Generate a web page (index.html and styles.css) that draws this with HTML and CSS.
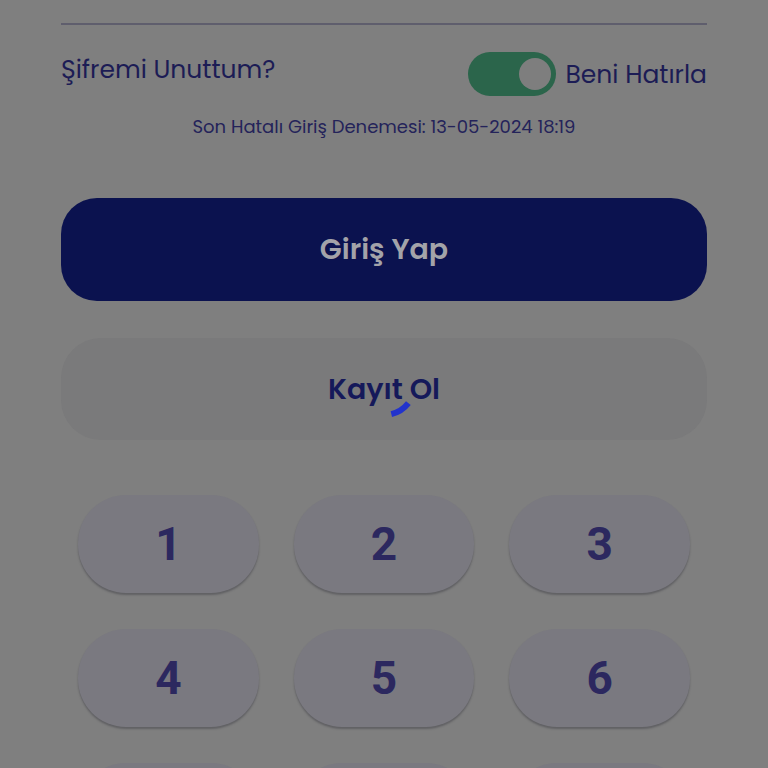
FILE: index.html
```html
<!DOCTYPE html>
<html lang="tr">
<head>
<meta charset="utf-8">
<title>Giriş</title>
<link rel="stylesheet" href="styles.css">
</head>
<body>
<main class="screen">
  <div class="divider"></div>
  <div class="options">
    <a class="forgot">Şifremi Unuttum?</a>
    <label class="remember">
      <span class="toggle"><span class="knob"></span></span>
      <span class="remember-text">Beni Hatırla</span>
    </label>
  </div>
  <p class="last-attempt">Son Hatalı Giriş Denemesi: 13-05-2024 18:19</p>
  <button class="btn btn-primary">Giriş Yap</button>
  <button class="btn btn-secondary">Kayıt Ol</button>
  <div class="keypad">
    <button class="key">1</button>
    <button class="key">2</button>
    <button class="key">3</button>
    <button class="key">4</button>
    <button class="key">5</button>
    <button class="key">6</button>
    <button class="key">7</button>
    <button class="key">8</button>
    <button class="key">9</button>
  </div>
</main>
<div class="loader">
  <svg width="80" height="80" viewBox="0 0 80 80">
    <circle cx="40" cy="40" r="31" fill="none" stroke="#2233cc" stroke-width="6" stroke-dasharray="20.6 200" stroke-dashoffset="-20.6"/>
  </svg>
</div>
</body>
</html>
```

FILE: styles.css
```css
html, body {
  margin: 0;
  padding: 0;
  background: #7f7f7f;
  overflow: hidden;
}
body {
  width: 768px;
  height: 768px;
  font-family: "Poppins", "Inter", "Open Sans", sans-serif;
  color: #1c1c55;
}
.screen {
  width: 646px;
  margin: 0 auto 0 61px;
  padding-top: 23px;
  display: flex;
  flex-direction: column;
}
.divider {
  height: 2px;
  background: #5f5e6d;
}
.options {
  margin-top: 27px;
  height: 44px;
  display: flex;
  justify-content: space-between;
  align-items: center;
}
.forgot {
  font-size: 25px;
  line-height: 1.2;
  margin-top: -8px;
}
.remember {
  display: flex;
  align-items: center;
  gap: 10px;
}
.toggle {
  width: 88px;
  height: 44px;
  border-radius: 22px;
  background: #2b654b;
  display: flex;
  align-items: center;
  justify-content: flex-end;
  padding-right: 5px;
  box-sizing: border-box;
}
.knob {
  width: 32px;
  height: 32px;
  border-radius: 50%;
  background: #7e7e7e;
}
.remember-text {
  font-size: 25px;
  line-height: 1.2;
  margin-top: 2px;
}
.last-attempt {
  margin: 18px 0 0;
  text-align: center;
  font-size: 18px;
  line-height: 26px;
  color: #24235a;
}
.btn {
  border: none;
  width: 100%;
  font-family: inherit;
  font-weight: 600;
  font-size: 28.5px;
  padding: 0;
}
.btn-primary {
  margin-top: 58px;
  height: 103px;
  border-radius: 36px;
  background: #0b124f;
  color: #a3a3a9;
}
.btn-secondary {
  margin-top: 37px;
  height: 102px;
  border-radius: 40px;
  background: #7a7a7b;
  color: #15195a;
}
.keypad {
  margin: 55px 17px 0;
  display: grid;
  grid-template-columns: repeat(3, 1fr);
  column-gap: 35px;
  row-gap: 36px;
}
.key {
  height: 98px;
  border: none;
  border-radius: 48px;
  background: #7a7980;
  box-shadow: 0 2px 2px rgba(40, 40, 50, 0.35);
  font-family: "Roboto", "Liberation Sans", sans-serif;
  font-weight: 700;
  font-size: 46px;
  line-height: 1;
  color: #2c285f;
  padding: 0;
}
.loader {
  position: fixed;
  left: 344px;
  top: 344px;
  width: 80px;
  height: 80px;
}
.loader svg {
  display: block;
}
```
